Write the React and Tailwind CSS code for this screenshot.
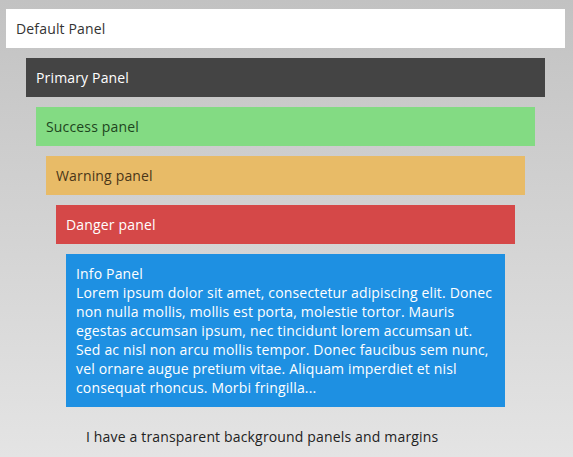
export default function App() {
  const font = { fontFamily: '"Open Sans", "Noto Sans", sans-serif' };
  return (
    <div
      className="min-h-screen w-full bg-[linear-gradient(to_bottom,#c2c2c2,#e4e4e4)] pt-[9px] pl-[6px] pr-[8px] text-[14px] leading-[19px] tracking-[0.16px]"
      style={font}
    >
      <div className="flex flex-col gap-[10px]">
        <div className="bg-white text-[#333333] p-[10px]">Default Panel</div>
        <div className="mx-[20px] bg-[#444444] text-white p-[10px]">Primary Panel</div>
        <div className="mx-[30px] bg-[#83db83] text-[#1d451d] p-[10px]">Success panel</div>
        <div className="mx-[40px] bg-[#e8bb67] text-[#4a3618] p-[10px]">Warning panel</div>
        <div className="mx-[50px] bg-[#d54848] text-white p-[10px]">Danger panel</div>
        <div className="mx-[60px] bg-[#1e90e2] text-white p-[10px]">
          <div>Info Panel</div>
          <div>
            Lorem ipsum dolor sit amet, consectetur adipiscing elit. Donec non nulla mollis, mollis est porta, molestie tortor. Mauris egestas accumsan ipsum, nec tincidunt lorem accumsan ut. Sed ac nisl non arcu mollis tempor. Donec faucibus sem nunc, vel ornare augue pretium vitae. Aliquam imperdiet et nisl consequat rhoncus. Morbi fringilla...
          </div>
        </div>
        <div className="mx-[70px] text-[#222222] p-[10px]">I have a transparent background panels and margins</div>
      </div>
    </div>
  );
}
